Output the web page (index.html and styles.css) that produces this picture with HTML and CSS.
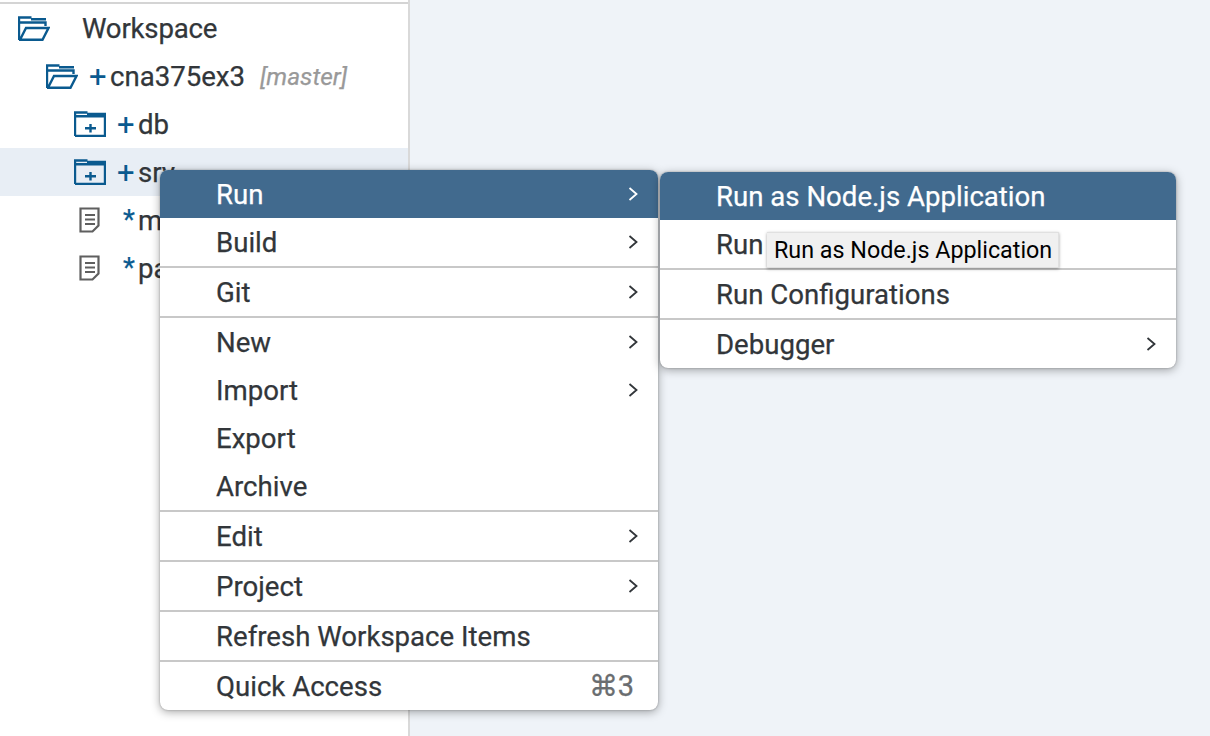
FILE: index.html
```html
<!DOCTYPE html>
<html lang="en">
<head>
<meta charset="utf-8">
<title>Workspace</title>
<link rel="stylesheet" href="styles.css">
</head>
<body>
<svg class="defs" width="0" height="0" aria-hidden="true">
  <symbol id="open" viewBox="0 0 32 25">
    <path d="M1 24V1.500h12.500M13 3.200h15M1 6.500h26.500V10M1 23.700H24.500L30.500 12H8L2 23.700" fill="none" stroke="currentColor" stroke-width="2.400"/>
  </symbol>
  <symbol id="closed" viewBox="0 0 32 26">
    <path d="M1 25V1.500h12.500M13 3h19M1 5.200h31M1 25h30V6M11 17.300h5M17 17.300h5M16.500 13v8.500" fill="none" stroke="currentColor" stroke-width="2.400"/>
  </symbol>
  <symbol id="doc" viewBox="0 0 22 26">
    <path d="M1.500 1.500h18v17l-6 6h-12zM6 8h10M6 12.500h10M6 17h10" fill="none" stroke="currentColor" stroke-width="2.200"/>
  </symbol>
  <symbol id="chev" viewBox="0 0 10 14">
    <path d="M1.500 1 8.500 7l-7 6" fill="none" stroke="currentColor" stroke-width="1.800"/>
  </symbol>
</svg>

<div class="page">
  <aside class="tree">
    <div class="row"><svg class="ic-open lvl0"><use href="#open"/></svg><span class="name name-root">Workspace</span></div>
    <div class="row"><svg class="ic-open lvl1"><use href="#open"/></svg><span class="mark">+</span><span class="name">cna375ex3</span><em class="branch">[master]</em></div>
    <div class="row"><svg class="ic-closed lvl2"><use href="#closed"/></svg><span class="mark">+</span><span class="name">db</span></div>
    <div class="row selected"><svg class="ic-closed lvl2"><use href="#closed"/></svg><span class="mark">+</span><span class="name">srv</span></div>
    <div class="row"><svg class="ic-doc lvl3"><use href="#doc"/></svg><span class="mark star">*</span><span class="name">mta.yaml</span></div>
    <div class="row"><svg class="ic-doc lvl3"><use href="#doc"/></svg><span class="mark star">*</span><span class="name">package.json</span></div>
  </aside>
  <main class="canvas"></main>
</div>

<div class="menu menu-main">
  <div class="item active">Run<svg class="chev"><use href="#chev"/></svg></div>
  <div class="item">Build<svg class="chev"><use href="#chev"/></svg></div>
  <hr class="sep">
  <div class="item">Git<svg class="chev"><use href="#chev"/></svg></div>
  <hr class="sep">
  <div class="item">New<svg class="chev"><use href="#chev"/></svg></div>
  <div class="item">Import<svg class="chev"><use href="#chev"/></svg></div>
  <div class="item">Export</div>
  <div class="item">Archive</div>
  <hr class="sep">
  <div class="item">Edit<svg class="chev"><use href="#chev"/></svg></div>
  <hr class="sep">
  <div class="item">Project<svg class="chev"><use href="#chev"/></svg></div>
  <hr class="sep">
  <div class="item">Refresh Workspace Items</div>
  <hr class="sep">
  <div class="item">Quick Access<span class="shortcut">⌘3</span></div>
</div>

<div class="menu menu-sub">
  <div class="item active">Run as Node.js Application</div>
  <div class="item">Run</div>
  <hr class="sep">
  <div class="item">Run Configurations</div>
  <hr class="sep">
  <div class="item">Debugger<svg class="chev"><use href="#chev"/></svg></div>
</div>

<div class="tooltip">Run as Node.js Application</div>
</body>
</html>
```

FILE: styles.css
```css
* { box-sizing: border-box; }
html, body { margin: 0; height: 100%; overflow: hidden; }
body {
  font-family: Roboto, "Liberation Sans", sans-serif;
  font-size: 27.600px;
  color: #32363a;
  background: #eff3f8;
  -webkit-text-stroke: 0.25px currentColor;
}
.defs { position: absolute; }
.page { display: flex; height: 736px; }
.tree {
  width: 410px;
  padding-top: 4px;
  background: #fff;
  border-right: 2px solid #d9d9d9;
}
.tree::before {
  content: "";
  display: block;
  height: 2px;
  margin-top: -2px;
  background: #d4d4d4;
}
.canvas { flex: 1; }
.row {
  display: flex;
  align-items: center;
  height: 48px;
  white-space: nowrap;
}
.row.selected { background: #e8eef5; }
.lvl0 { margin-left: 18px; }
.lvl1 { margin-left: 46px; }
.lvl2 { margin-left: 74px; }
.lvl3 { margin-left: 79px; }
.ic-open { width: 32px; height: 25px; color: #0a5a8f; flex: none; }
.ic-closed { width: 32px; height: 26px; color: #0a5a8f; flex: none; }
.ic-doc { width: 22px; height: 26px; color: #5f5f5f; flex: none; }
.mark { color: #0a5a8f; margin-left: 11px; width: 21px; font-size: 31px; line-height: 1; -webkit-text-stroke: 0; }
.mark.star { margin-left: 22px; width: 15px; font-size: 27.600px; -webkit-text-stroke: 0.25px currentColor; }
.name-root { margin-left: 32px; letter-spacing: -0.2px; }
.branch { margin-left: 15px; font-size: 24.500px; color: #999; }
.menu {
  position: absolute;
  background: #fff;
  border-radius: 8px;
  overflow: hidden;
  box-shadow: 0 0 2px rgba(0,0,0,.3), 0 2px 10px rgba(0,0,0,.35);
}
.menu-main { left: 160px; top: 170px; width: 498px; }
.menu-sub { left: 660px; top: 172px; width: 516px; }
.item {
  display: flex;
  align-items: center;
  justify-content: space-between;
  height: 48px;
  padding: 0 20px 0 56px;
  white-space: nowrap;
}
.item.active { background: #416a8e; color: #fff; }
.sep { height: 2px; margin: 0; border: 0; background: #c8c8c8; }
.chev { width: 10px; height: 14px; color: #32363a; }
.item.active .chev { color: #fff; }
.shortcut { color: #6a6d70; margin-right: 4px; font-size: 29px; }
.tooltip {
  position: absolute;
  left: 767px;
  top: 232px;
  width: 292px;
  height: 36px;
  padding-left: 7px;
  line-height: 34px;
  font-size: 23.300px;
  color: #000;
  background: #f0f0f0;
  border: 1px solid #e0e0e0;
  border-left-width: 0;
  box-shadow: 0 1px 3px rgba(0,0,0,.35);
  white-space: nowrap;
  -webkit-text-stroke: 0;
}
```
